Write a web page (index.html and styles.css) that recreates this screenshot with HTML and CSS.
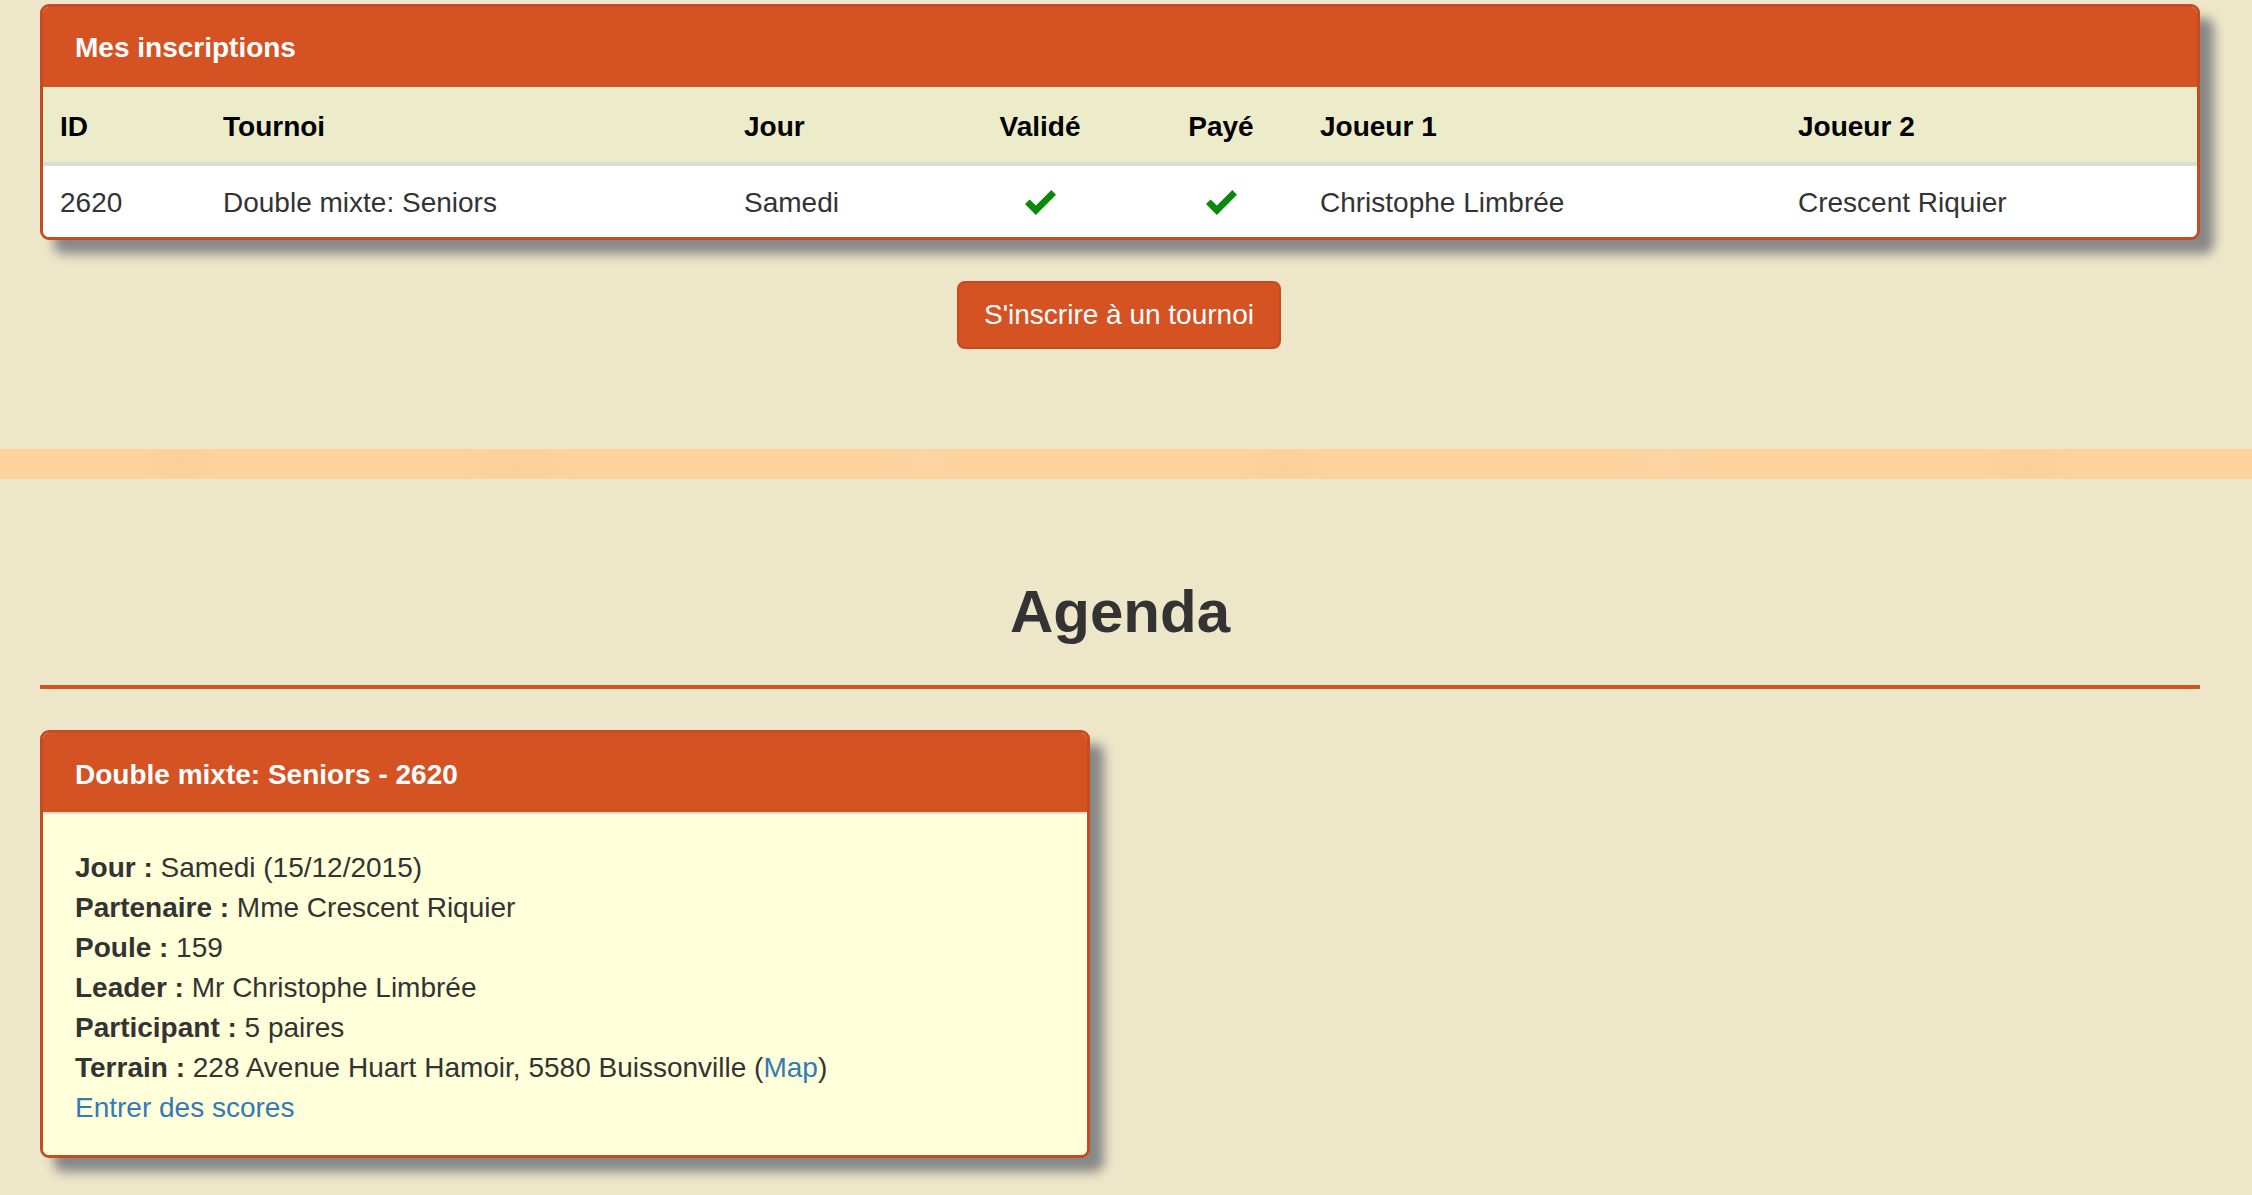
FILE: index.html
```html
<!DOCTYPE html>
<html lang="fr">
<head>
<meta charset="utf-8">
<title>Mes inscriptions</title>
<link rel="stylesheet" href="styles.css">
</head>
<body>
<section class="top-section">
  <div class="panel">
    <div class="panel-heading"><h3 class="panel-title">Mes inscriptions</h3></div>
    <table class="reg-table">
      <colgroup>
        <col class="c-id"><col class="c-tournoi"><col class="c-jour"><col class="c-valide"><col class="c-paye"><col class="c-j1"><col class="c-j2">
      </colgroup>
      <thead>
        <tr>
          <th>ID</th><th>Tournoi</th><th>Jour</th><th class="center">Validé</th><th class="center">Payé</th><th>Joueur 1</th><th>Joueur 2</th>
        </tr>
      </thead>
      <tbody>
        <tr>
          <td>2620</td>
          <td>Double mixte: Seniors</td>
          <td>Samedi</td>
          <td class="center"><svg class="check" viewBox="0 0 30 25" width="31" height="26"><path d="M0 13.5 L4.5 9 L10.5 15 L25.5 0 L30 4.5 L10.5 24 Z" fill="#0a8a0a"/></svg></td>
          <td class="center"><svg class="check" viewBox="0 0 30 25" width="31" height="26"><path d="M0 13.5 L4.5 9 L10.5 15 L25.5 0 L30 4.5 L10.5 24 Z" fill="#0a8a0a"/></svg></td>
          <td>Christophe Limbrée</td>
          <td>Crescent Riquier</td>
        </tr>
      </tbody>
    </table>
  </div>
  <div class="actions">
    <a class="btn" href="#">S'inscrire à un tournoi</a>
  </div>
</section>
<div class="stripe"></div>
<section class="agenda-section">
  <h2 class="agenda-title">Agenda</h2>
  <hr class="agenda-rule">
  <div class="agenda-grid">
    <div class="panel agenda-panel">
      <div class="panel-heading agenda-heading"><h3 class="panel-title">Double mixte: Seniors - 2620</h3></div>
      <div class="panel-body">
        <div><b>Jour :</b> Samedi (15/12/2015)</div>
        <div><b>Partenaire :</b> Mme Crescent Riquier</div>
        <div><b>Poule :</b> 159</div>
        <div><b>Leader :</b> Mr Christophe Limbrée</div>
        <div><b>Participant :</b> 5 paires</div>
        <div><b>Terrain :</b> 228 Avenue Huart Hamoir, 5580 Buissonville (<a href="#">Map</a>)</div>
        <div><a href="#">Entrer des scores</a></div>
      </div>
    </div>
  </div>
</section>
</body>
</html>
```

FILE: styles.css
```css
html, body {
  margin: 0;
  padding: 0;
}

body {
  background: #eee6c8;
  font-family: "Liberation Sans", Arial, Helvetica, sans-serif;
  font-size: 28px;
  line-height: 40px;
  color: #333;
}

.top-section {
  padding: 4px 52px 0 40px;
}

.panel {
  border: 3px solid #c44c21;
  border-radius: 9px;
  overflow: hidden;
  background: #fff;
  box-shadow: 14px 14px 11px #888;
}

.panel-heading {
  background: #d55323;
  padding: 21px 32px 19px;
}

.panel-title {
  margin: 0;
  font-size: 28px;
  line-height: 40px;
  font-weight: bold;
  color: #fff;
}

.reg-table {
  width: 100%;
  border-collapse: collapse;
  table-layout: fixed;
}

.c-id { width: 163px; }
.c-tournoi { width: 521px; }
.c-jour { width: 214px; }
.c-valide { width: 198px; }
.c-paye { width: 164px; }
.c-j1 { width: 478px; }
.c-j2 { width: 416px; }

.reg-table th {
  background: #edecca;
  color: #000;
  font-weight: bold;
  text-align: left;
  padding: 20px 16px 15px 17px;
  border-bottom: 4px solid #dcdcd6;
  white-space: nowrap;
}

.reg-table td {
  background: #fff;
  padding: 17px 16px 14px 17px;
  white-space: nowrap;
}

.reg-table .center {
  text-align: center;
  padding-left: 16px;
}

.check {
  display: inline-block;
  vertical-align: middle;
  margin-top: -4px;
}

.actions {
  margin-top: 41px;
  display: flex;
  justify-content: center;
  padding-right: 2px;
  padding-bottom: 100px;
}

.btn {
  display: inline-block;
  background: #d55323;
  border: 2px solid #c44a1f;
  border-radius: 8px;
  color: #fff;
  text-decoration: none;
  font-size: 28px;
  line-height: 40px;
  padding: 12px 25px;
}

.stripe {
  height: 30px;
  background-color: #fdd29d;
  background-image:
    radial-gradient(circle at 8% 40%, rgba(240, 195, 140, 0.2) 0, rgba(240, 195, 140, 0) 40px),
    radial-gradient(circle at 23% 70%, rgba(240, 195, 140, 0.18) 0, rgba(240, 195, 140, 0) 60px),
    radial-gradient(circle at 41% 30%, rgba(255, 225, 185, 0.2) 0, rgba(255, 225, 185, 0) 50px),
    radial-gradient(circle at 57% 60%, rgba(240, 195, 140, 0.18) 0, rgba(240, 195, 140, 0) 45px),
    radial-gradient(circle at 74% 40%, rgba(255, 225, 185, 0.2) 0, rgba(255, 225, 185, 0) 55px),
    radial-gradient(circle at 90% 55%, rgba(240, 195, 140, 0.18) 0, rgba(240, 195, 140, 0) 50px);
}

.agenda-section {
  padding: 100px 52px 60px 40px;
}

.agenda-title {
  margin: 0;
  text-align: center;
  font-size: 60px;
  line-height: 66px;
  font-weight: bold;
  color: #333;
}

.agenda-rule {
  margin: 40px 0 0;
  border: 0;
  height: 4px;
  background: #d55323;
}

.agenda-grid {
  margin-top: 41px;
  display: grid;
  grid-template-columns: 1050px 1fr;
}

.agenda-heading {
  padding: 22px 32px 17px;
  border-bottom: 2px solid #e4ddd0;
}

.panel-body {
  background: #ffffd9;
  padding: 34px 32px 27px;
}

.panel-body b {
  font-weight: bold;
  color: #333;
}

.panel-body a {
  color: #337ab7;
  text-decoration: none;
}
```
